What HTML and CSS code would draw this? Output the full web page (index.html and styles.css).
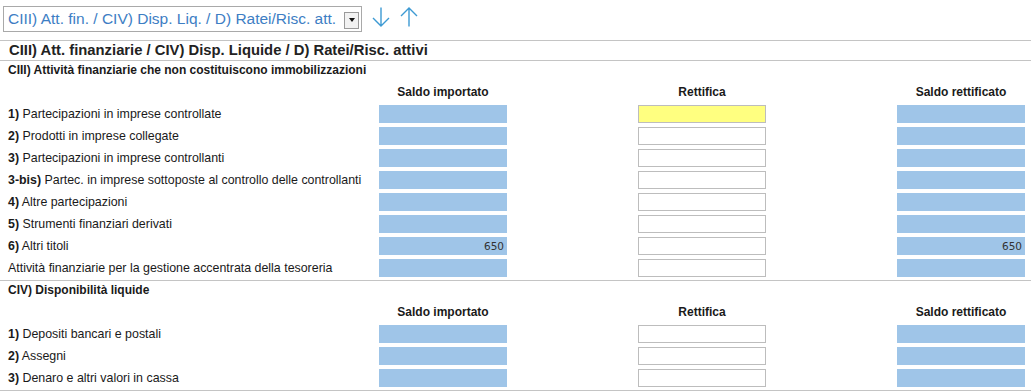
FILE: index.html
```html
<!DOCTYPE html>
<html lang="it">
<head>
    <meta charset="UTF-8">
    <title>CIII) Att. finanziarie / CIV) Disp. Liquide / D) Ratei/Risc. attivi</title>
    <link rel="stylesheet" href="styles.css">
</head>
<body>
    <div class="toolbar">
        <div class="select">
            <span class="select-text">CIII) Att. fin. / CIV) Disp. Liq. / D) Ratei/Risc. att.</span>
            <span class="select-btn"><span class="caret"></span></span>
        </div>
        <button class="nav-btn" title="Giù">
            <svg width="18" height="20" viewBox="0 0 18 20"><path d="M9 0.5V19M1 11l8 8 8-8" fill="none" stroke="#3d9ad3" stroke-width="1.4"/></svg>
        </button>
        <button class="nav-btn" title="Su">
            <svg width="18" height="20" viewBox="0 0 18 20"><path d="M9 19.5V1M1 9l8-8 8 8" fill="none" stroke="#3d9ad3" stroke-width="1.4"/></svg>
        </button>
    </div>

    <h1 class="page-title">CIII) Att. finanziarie / CIV) Disp. Liquide / D) Ratei/Risc. attivi</h1>

    <div class="section">
        <h2 class="section-title">CIII) Attività finanziarie che non costituiscono immobilizzazioni</h2>
        <div class="row col-heads">
            <div class="label"></div>
            <div class="field-head">Saldo importato</div>
            <div class="field-head">Rettifica</div>
            <div class="field-head">Saldo rettificato</div>
        </div>
        <div class="row">
            <div class="label"><b>1)</b> Partecipazioni in imprese controllate</div>
            <input class="field locked" type="text" readonly>
            <input class="field edit active" type="text">
            <input class="field locked" type="text" readonly>
        </div>
        <div class="row">
            <div class="label"><b>2)</b> Prodotti in imprese collegate</div>
            <input class="field locked" type="text" readonly>
            <input class="field edit" type="text">
            <input class="field locked" type="text" readonly>
        </div>
        <div class="row">
            <div class="label"><b>3)</b> Partecipazioni in imprese controllanti</div>
            <input class="field locked" type="text" readonly>
            <input class="field edit" type="text">
            <input class="field locked" type="text" readonly>
        </div>
        <div class="row">
            <div class="label"><b>3-bis)</b> Partec. in imprese sottoposte al controllo delle controllanti</div>
            <input class="field locked" type="text" readonly>
            <input class="field edit" type="text">
            <input class="field locked" type="text" readonly>
        </div>
        <div class="row">
            <div class="label"><b>4)</b> Altre partecipazioni</div>
            <input class="field locked" type="text" readonly>
            <input class="field edit" type="text">
            <input class="field locked" type="text" readonly>
        </div>
        <div class="row">
            <div class="label"><b>5)</b> Strumenti finanziari derivati</div>
            <input class="field locked" type="text" readonly>
            <input class="field edit" type="text">
            <input class="field locked" type="text" readonly>
        </div>
        <div class="row">
            <div class="label"><b>6)</b> Altri titoli</div>
            <input class="field locked" type="text" value="650" readonly>
            <input class="field edit" type="text">
            <input class="field locked" type="text" value="650" readonly>
        </div>
        <div class="row">
            <div class="label">Attività finanziarie per la gestione accentrata della tesoreria</div>
            <input class="field locked" type="text" readonly>
            <input class="field edit" type="text">
            <input class="field locked" type="text" readonly>
        </div>
    </div>

    <div class="section">
        <h2 class="section-title">CIV) Disponibilità liquide</h2>
        <div class="row col-heads">
            <div class="label"></div>
            <div class="field-head">Saldo importato</div>
            <div class="field-head">Rettifica</div>
            <div class="field-head">Saldo rettificato</div>
        </div>
        <div class="row">
            <div class="label"><b>1)</b> Depositi bancari e postali</div>
            <input class="field locked" type="text" readonly>
            <input class="field edit" type="text">
            <input class="field locked" type="text" readonly>
        </div>
        <div class="row">
            <div class="label"><b>2)</b> Assegni</div>
            <input class="field locked" type="text" readonly>
            <input class="field edit" type="text">
            <input class="field locked" type="text" readonly>
        </div>
        <div class="row">
            <div class="label"><b>3)</b> Denaro e altri valori in cassa</div>
            <input class="field locked" type="text" readonly>
            <input class="field edit" type="text">
            <input class="field locked" type="text" readonly>
        </div>
    </div>
</body>
</html>
```

FILE: styles.css
```css
body {
    font-family: "Liberation Sans", Arial, sans-serif;
    font-size: 12px;
    color: #1a1a1a;
    background-color: #fff;
    margin: 0;
    width: 1031px;
}

.toolbar {
    display: flex;
    align-items: flex-start;
    height: 40px;
    padding: 6px 0 0 3px;
    box-sizing: border-box;
}

.select {
    display: flex;
    align-items: center;
    width: 359px;
    height: 26px;
    border: 1px solid #a9a9a9;
    box-sizing: border-box;
    padding: 0 2px 0 4px;
}

.select-text {
    flex: 1;
    font-size: 15.5px;
    color: #3d7ec4;
    white-space: nowrap;
}

.select-btn {
    display: flex;
    align-items: center;
    justify-content: center;
    width: 15px;
    height: 17px;
    margin-top: 2px;
    border: 1px solid #9a9a9a;
    background-color: #f2f2f2;
    box-sizing: border-box;
}

.caret {
    width: 0;
    height: 0;
    border-left: 3px solid transparent;
    border-right: 3px solid transparent;
    border-top: 4px solid #111;
}

.nav-btn {
    background: none;
    border: none;
    padding: 0;
    margin: 1px 0 0 10px;
    height: 20px;
    cursor: pointer;
}

.nav-btn + .nav-btn {
    margin-left: 10px;
}

.page-title {
    margin: 0;
    height: 21px;
    line-height: 19px;
    padding-left: 9px;
    font-size: 14.8px;
    font-weight: bold;
    color: #222;
    border-top: 1px solid #c4c4c4;
    border-bottom: 1px solid #c4c4c4;
    box-sizing: border-box;
}

.section {
    padding: 0 0 1px 8px;
    border-bottom: 1px solid #c4c4c4;
}

.section-title {
    margin: 0;
    height: 20px;
    line-height: 19px;
    font-size: 12px;
    font-weight: bold;
}

.row {
    display: flex;
    align-items: center;
    height: 22px;
}

.label {
    width: 371px;
    white-space: nowrap;
    font-size: 12.4px;
}

.field-head,
.field {
    width: 128px;
    box-sizing: border-box;
}

.field-head + .field-head,
.field + .field {
    margin-left: 131px;
}

.field-head {
    text-align: center;
    font-weight: bold;
}

.field {
    height: 18px;
    margin: 0;
    padding: 0 2px;
    text-align: right;
    font-family: "DejaVu Sans", Tahoma, sans-serif;
    font-size: 10.5px;
    color: #333;
    outline: none;
}

.locked {
    background-color: #9fc5e8;
    border: 1px solid #9fc5e8;
}

.edit {
    background-color: #fff;
    border: 1px solid #bdbdbd;
}

.active {
    background-color: #ffff80;
}
```
